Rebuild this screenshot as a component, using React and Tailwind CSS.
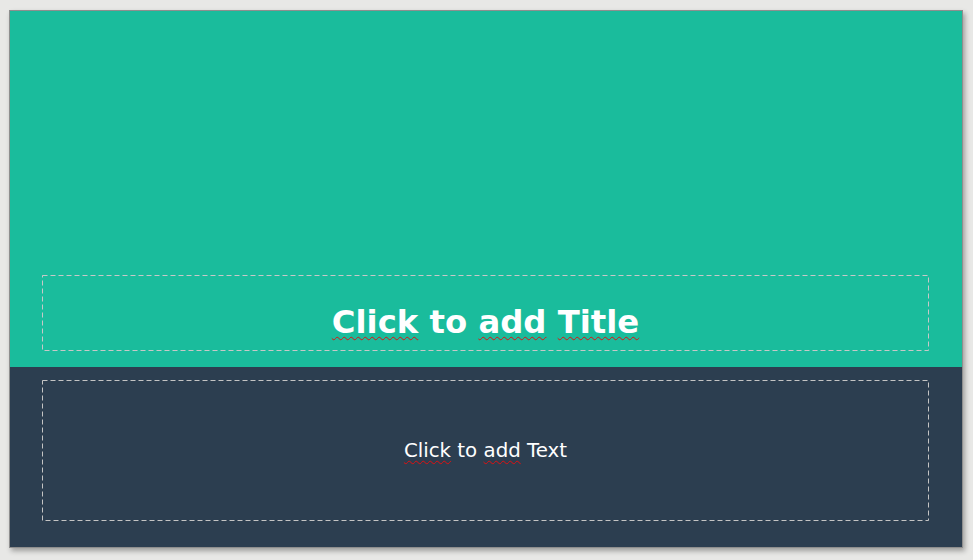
export default function App() {
  const sq = "underline decoration-wavy decoration-[#e01010] decoration-1 underline-offset-[3px]";
  return (
    <div className="w-[973px] h-[560px] bg-[#e8e8e6] pl-[10px] pt-[11px] overflow-hidden" style={{ fontFamily: '"DejaVu Sans", sans-serif' }}>
      <div className="w-[952px] h-[536px] flex flex-col shadow-[0_0_0_1px_#8e8e8e,2px_3px_5px_1px_rgba(0,0,0,0.32)]">
        <div className="h-[356px] bg-[#1abc9c] pt-[264px] pl-[32px]">
          <div className="relative w-[887px] h-[76px] pt-[31px] text-center text-white font-bold text-[32.3px] leading-none">
            <svg className="absolute inset-0" width="887" height="76">
              <rect x="0.5" y="0.5" width="886" height="75" fill="none" stroke="#c8c8c8" strokeWidth="1" strokeDasharray="5 3" />
            </svg>
            <span className="relative"><span className={sq}>Click</span> to <span className={sq}>add</span> <span className={sq}>Title</span></span>
          </div>
        </div>
        <div className="h-[180px] bg-[#2c3e50] pt-[13px] pl-[32px]">
          <div className="relative w-[887px] h-[141px] flex items-center justify-center text-white text-[19.8px] leading-none">
            <svg className="absolute inset-0" width="887" height="141">
              <rect x="0.5" y="0.5" width="886" height="140" fill="none" stroke="#c4c4c4" strokeWidth="1" strokeDasharray="5 3" />
            </svg>
            <span className="relative"><span className={sq}>Click</span> to <span className={sq}>add</span> Text</span>
          </div>
        </div>
      </div>
    </div>
  );
}
